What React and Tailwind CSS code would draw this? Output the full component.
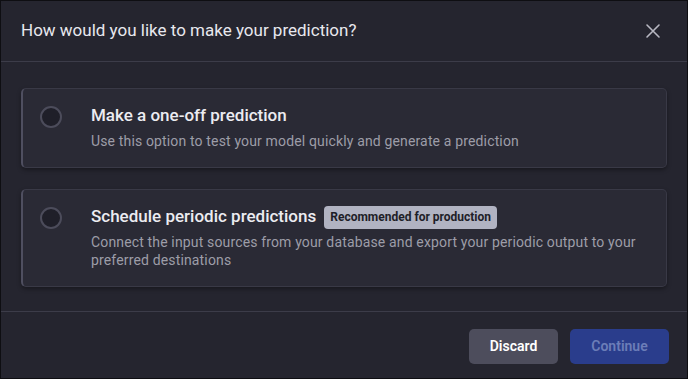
import React, { useState } from 'react';

const options = [
  {
    id: 'one-off',
    title: 'Make a one-off prediction',
    desc: 'Use this option to test your model quickly and generate a prediction',
  },
  {
    id: 'periodic',
    title: 'Schedule periodic predictions',
    badge: 'Recommended for production',
    desc: 'Connect the input sources from your database and export your periodic output to your preferred destinations',
  },
];

export default function App() {
  const [selected, setSelected] = useState(null);

  return (
    <div className="w-[688px] h-[379px] bg-[#25252f] border border-[#0e0e12] flex flex-col text-[#e4e4ea] font-['Roboto',sans-serif] overflow-hidden">
      <div className="h-[61px] shrink-0 flex items-center justify-between pl-[20px] pr-[26px] border-b border-[#3c3c49]">
        <div className="text-[17px] text-[#e8e8ee]">How would you like to make your prediction?</div>
        <button className="text-[#b8b8c2]">
          <svg width="16" height="16" viewBox="0 0 16 16" fill="none" stroke="currentColor" strokeWidth="1.6" strokeLinecap="round">
            <path d="M2 2l12 12M14 2L2 14" />
          </svg>
        </button>
      </div>

      <div className="flex-1 flex flex-col gap-[21px] px-[20px] pt-[26px]">
        {options.map(o => (
          <button
            key={o.id}
            onClick={() => setSelected(o.id)}
            className="w-full flex items-start text-left rounded-[5px] bg-[#2a2a35] border border-[#393946] border-l-2 border-l-[#4f4f60] shadow-[0_2px_4px_rgba(0,0,0,0.35)] py-[17px] pl-[17px] pr-4"
          >
            <span className="w-[22px] h-[22px] rounded-full border-2 border-[#4c4c5b] bg-[#1f1f29] shrink-0 flex items-center justify-center">
              {selected === o.id && <span className="w-[10px] h-[10px] rounded-full bg-[#4a66d8]" />}
            </span>
            <span className="ml-[29px] flex flex-col">
              <span className="flex items-center gap-[8px] h-[20px]">
                <span className="text-[17px] font-medium text-[#ececf1]">{o.title}</span>
                {o.badge && (
                  <span className="h-[23px] flex items-center px-[6px] rounded-[4px] bg-[#b1b3c2] text-[#1e1e28] text-[12px] font-bold">
                    {o.badge}
                  </span>
                )}
              </span>
              <span className="mt-[6px] text-[14px] leading-[18px] tracking-[0.15px] text-[#9d9da8]">{o.desc}</span>
            </span>
          </button>
        ))}
      </div>

      <div className="h-[67px] shrink-0 border-t border-[#3c3c49] flex items-center justify-end gap-[12px] px-[18px] pt-[2px]">
        <button className="w-[89px] h-[35px] rounded-[5px] bg-[#4d4d5c] text-white text-[14px] font-semibold">Discard</button>
        <button className="w-[99px] h-[35px] rounded-[5px] bg-[#2a3d8c] text-[#6c7db8] text-[14px] font-semibold">Continue</button>
      </div>
    </div>
  );
}
